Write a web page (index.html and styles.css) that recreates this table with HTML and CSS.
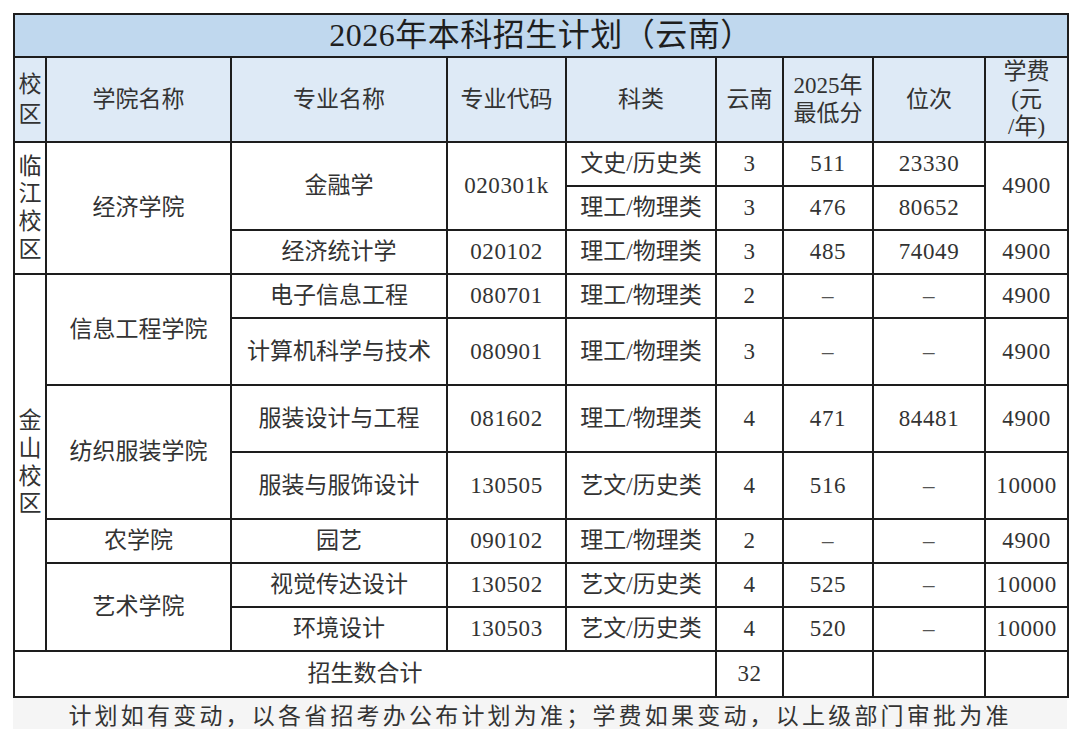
FILE: index.html
```html
<!DOCTYPE html>
<html lang="zh-CN">
<head>
<meta charset="utf-8">
<title>2026年本科招生计划（云南）</title>
<link rel="stylesheet" href="styles.css">
</head>
<body>
<div class="page">
  <table class="plan">
    <colgroup>
      <col class="c1"><col class="c2"><col class="c3"><col class="c4"><col class="c5">
      <col class="c6"><col class="c7"><col class="c8"><col class="c9">
    </colgroup>
    <tr class="r-title"><td colspan="9" class="title">2026年本科招生计划（云南）</td></tr>
    <tr class="r-head">
      <td class="vert">校<br>区</td>
      <td>学院名称</td>
      <td>专业名称</td>
      <td>专业代码</td>
      <td>科类</td>
      <td>云南</td>
      <td class="two">2025年<br>最低分</td>
      <td>位次</td>
      <td class="three">学费<br>(元<br>/年)</td>
    </tr>
    <tr class="r44">
      <td rowspan="3" class="vert">临<br>江<br>校<br>区</td>
      <td rowspan="3">经济学院</td>
      <td rowspan="2">金融学</td>
      <td rowspan="2" class="n">020301k</td>
      <td>文史/历史类</td>
      <td class="n">3</td>
      <td class="n">511</td>
      <td class="n">23330</td>
      <td rowspan="2" class="n">4900</td>
    </tr>
    <tr class="r44">
      <td>理工/物理类</td>
      <td class="n">3</td>
      <td class="n">476</td>
      <td class="n">80652</td>
    </tr>
    <tr class="r44">
      <td>经济统计学</td>
      <td class="n">020102</td>
      <td>理工/物理类</td>
      <td class="n">3</td>
      <td class="n">485</td>
      <td class="n">74049</td>
      <td class="n">4900</td>
    </tr>
    <tr class="r44">
      <td rowspan="7" class="vert">金<br>山<br>校<br>区</td>
      <td rowspan="2">信息工程学院</td>
      <td>电子信息工程</td>
      <td class="n">080701</td>
      <td>理工/物理类</td>
      <td class="n">2</td>
      <td class="n dash">–</td>
      <td class="n dash">–</td>
      <td class="n">4900</td>
    </tr>
    <tr class="r67">
      <td>计算机科学与技术</td>
      <td class="n">080901</td>
      <td>理工/物理类</td>
      <td class="n">3</td>
      <td class="n dash">–</td>
      <td class="n dash">–</td>
      <td class="n">4900</td>
    </tr>
    <tr class="r67">
      <td rowspan="2">纺织服装学院</td>
      <td>服装设计与工程</td>
      <td class="n">081602</td>
      <td>理工/物理类</td>
      <td class="n">4</td>
      <td class="n">471</td>
      <td class="n">84481</td>
      <td class="n">4900</td>
    </tr>
    <tr class="r67">
      <td>服装与服饰设计</td>
      <td class="n">130505</td>
      <td>艺文/历史类</td>
      <td class="n">4</td>
      <td class="n">516</td>
      <td class="n dash">–</td>
      <td class="n">10000</td>
    </tr>
    <tr class="r44">
      <td>农学院</td>
      <td>园艺</td>
      <td class="n">090102</td>
      <td>理工/物理类</td>
      <td class="n">2</td>
      <td class="n dash">–</td>
      <td class="n dash">–</td>
      <td class="n">4900</td>
    </tr>
    <tr class="r44">
      <td rowspan="2">艺术学院</td>
      <td>视觉传达设计</td>
      <td class="n">130502</td>
      <td>艺文/历史类</td>
      <td class="n">4</td>
      <td class="n">525</td>
      <td class="n dash">–</td>
      <td class="n">10000</td>
    </tr>
    <tr class="r44">
      <td>环境设计</td>
      <td class="n">130503</td>
      <td>艺文/历史类</td>
      <td class="n">4</td>
      <td class="n">520</td>
      <td class="n dash">–</td>
      <td class="n">10000</td>
    </tr>
    <tr class="r46">
      <td colspan="5">招生数合计</td>
      <td class="n">32</td>
      <td></td>
      <td></td>
      <td></td>
    </tr>
  </table>
  <div class="note">计划如有变动，以各省招考办公布计划为准；学费如果变动，以上级部门审批为准</div>
</div>
</body>
</html>
```

FILE: styles.css
```css
html, body {
  margin: 0;
  padding: 0;
  background: #ffffff;
}

.page {
  padding: 13px 0 0 13px;
  width: 1054px;
}

.plan {
  border-collapse: collapse;
  table-layout: fixed;
  width: 1054px;
  font-family: "Liberation Serif", "Noto Sans CJK SC", serif;
  font-size: 23px;
  color: #333333;
}

.c1 { width: 32px; }
.c2 { width: 185px; }
.c3 { width: 216px; }
.c4 { width: 119px; }
.c5 { width: 150px; }
.c6 { width: 67px; }
.c7 { width: 90px; }
.c8 { width: 112px; }
.c9 { width: 83px; }

.plan td {
  border: 2px solid #1d1d1d;
  text-align: center;
  vertical-align: middle;
  padding: 0;
  line-height: 1.2;
  white-space: nowrap;
}

.r-title { height: 43px; }
.r-head { height: 85px; }
.r44 { height: 44px; }
.r67 { height: 67px; }
.r46 { height: 46px; }

.title {
  background: #c0d8ee;
  font-size: 32px;
  color: #1e1e1e;
  letter-spacing: 0.5px;
}

.r-head td {
  background: #deeaf6;
}

.vert {
  line-height: 28px;
}

.r-head .vert {
  line-height: 30px;
}

.two {
  line-height: 26px;
}

.three {
  line-height: 26px;
}

.n {
  letter-spacing: 0.6px;
}

.dash {
  color: #555555;
}

.note {
  height: 31px;
  line-height: 33px;
  background: #f5f5f5;
  text-align: center;
  font-family: "Noto Sans CJK SC", sans-serif;
  font-size: 23px;
  letter-spacing: 3.2px;
  color: #333333;
}
```
